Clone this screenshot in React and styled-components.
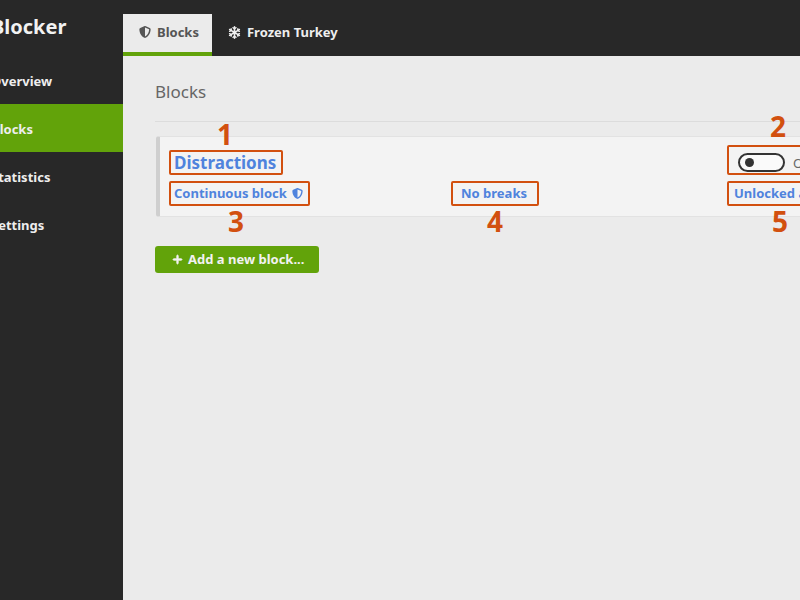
import React from "react";
import styled, { createGlobalStyle } from "styled-components";
import { FaShieldHalved, FaSnowflake, FaPlus } from "react-icons/fa6";

const GlobalStyle = createGlobalStyle`
  html, body {
    margin: 0;
    height: 100%;
    overflow: hidden;
    background: #ebebeb;
    font-family: "Noto Sans", "Open Sans", sans-serif;
  }
`;

const dark = "#282828";
const green = "#62a30a";
const blue = "#4f83dd";
const orange = "#d2500f";

// the window is wider than the picture: it runs off both sides
const Shell = styled.div`
  display: flex;
  width: 1040px;
  height: 600px;
  margin-left: -60px;
`;

const Sidebar = styled.aside`
  flex: 0 0 183px;
  background: ${dark};
  color: #eee;
`;

const Brand = styled.div`
  height: 56px;
  padding-left: 51px;
  box-sizing: border-box;
  font-size: 20px;
  font-weight: 700;
  line-height: 53px;
  color: #f2f2f2;
`;

const NavItem = styled.div`
  height: 48px;
  padding-left: 51px;
  font-size: 13px;
  font-weight: 700;
  line-height: 50px;
  background: ${(p) => (p.$active ? green : "transparent")};
`;

const Main = styled.main`
  flex: 1;
  display: flex;
  flex-direction: column;
`;

const TabBar = styled.nav`
  display: flex;
  align-items: flex-end;
  height: 56px;
  background: ${dark};
`;

const Tab = styled.div`
  display: flex;
  align-items: center;
  gap: 6px;
  height: 42px;
  padding: 0 13px 2px 16px;
  box-sizing: border-box;
  font-size: 13px;
  font-weight: 700;
  color: ${(p) => (p.$active ? "#555" : "#eee")};
  background: ${(p) => (p.$active ? "#ebebeb" : "transparent")};
  border-bottom: 4px solid ${(p) => (p.$active ? green : "transparent")};
`;

const Content = styled.section`
  flex: 1;
  padding: 24px 32px;
  background: #ebebeb;
`;

const Header = styled.header`
  display: flex;
  align-items: flex-start;
  justify-content: space-between;
  height: 41px;
  margin-bottom: 14px;
  border-bottom: 1px solid #dcdcdc;
`;

const Title = styled.h1`
  margin: 0;
  font-size: 17px;
  font-weight: 400;
  line-height: 23px;
  color: #666;
`;

const GreyButton = styled.div`
  width: 120px;
  height: 27px;
  background: #dcdcdc;
  border-radius: 3px;
`;

const Card = styled.article`
  display: flex;
  flex-direction: column;
  justify-content: center;
  gap: 10px;
  height: 81px;
  box-sizing: border-box;
  margin-left: 1px;
  padding: 0 0 0 14px;
  background: #f3f3f3;
  border: 1px solid #e2e2e2;
  border-left: 4px solid #cfcfcf;
  border-radius: 3px;
`;

const Row = styled.div`
  display: grid;
  grid-template-columns: 287px 273px 1fr;
  align-items: center;
`;

const BlockName = styled.span`
  font-size: 17px;
  font-weight: 700;
  color: ${blue};
`;

const BlockLink = styled.span`
  display: inline-flex;
  align-items: center;
  gap: 5px;
  font-size: 13px;
  font-weight: 700;
  color: ${blue};
`;

const ToggleRow = styled.div`
  display: flex;
  align-items: center;
  gap: 8px;
  margin-left: 4px;
  font-size: 13px;
  color: #666;
`;

const Toggle = styled.span`
  display: flex;
  align-items: center;
  width: 47px;
  height: 19px;
  box-sizing: border-box;
  padding-left: 5px;
  background: #fafafa;
  border: 2px solid #333;
  border-radius: 10px;

  &::before {
    content: "";
    width: 9px;
    height: 9px;
    background: #333;
    border-radius: 50%;
  }
`;

const Note = styled.span`
  position: relative;
  display: inline-flex;
  justify-self: start;

  &::before {
    content: "";
    position: absolute;
    inset: ${(p) => p.$inset};
    border: 2px solid ${orange};
    border-radius: 2px;
  }
`;

const NoteNumber = styled.span`
  position: absolute;
  left: ${(p) => p.$left}px;
  top: ${(p) => p.$top}px;
  font-size: 28px;
  font-weight: 700;
  line-height: 34px;
  color: ${orange};
`;

const AddButton = styled.button`
  display: flex;
  align-items: center;
  gap: 5px;
  height: 27px;
  margin-top: 29px;
  padding: 0 15px 1px 17px;
  border: 0;
  border-radius: 3px;
  background: ${green};
  color: #f2f2f2;
  font-family: inherit;
  font-size: 13px;
  font-weight: 700;

  svg {
    stroke: currentColor;
    stroke-width: 40px;
  }
`;

export default function App() {
  return (
    <>
      <GlobalStyle />
      <Shell>
        <Sidebar>
          <Brand>Blocker</Brand>
          <NavItem>Overview</NavItem>
          <NavItem $active>Blocks</NavItem>
          <NavItem>Statistics</NavItem>
          <NavItem>Settings</NavItem>
        </Sidebar>
        <Main>
          <TabBar>
            <Tab $active>
              <FaShieldHalved size={12} />
              Blocks
            </Tab>
            <Tab>
              <FaSnowflake size={13} />
              Frozen Turkey
            </Tab>
          </TabBar>
          <Content>
            <Header>
              <Title>Blocks</Title>
              <GreyButton />
            </Header>
            <Card>
              <Row>
                <Note $inset="-1px -7px -1px -5px">
                  <BlockName>Distractions</BlockName>
                  <NoteNumber $left={43} $top={-34}>1</NoteNumber>
                </Note>
                <span />
                <Note $inset="-8px -7px -3px -7px">
                  <ToggleRow>
                    <Toggle />
                    Off
                  </ToggleRow>
                  <NoteNumber $left={36} $top={-44}>2</NoteNumber>
                </Note>
              </Row>
              <Row>
                <Note $inset="-3px -7px -4px -5px">
                  <BlockLink>
                    Continuous block
                    <FaShieldHalved size={11} />
                  </BlockLink>
                  <NoteNumber $left={54} $top={20}>3</NoteNumber>
                </Note>
                <Note $inset="-3px -12px -4px -10px">
                  <BlockLink>No breaks</BlockLink>
                  <NoteNumber $left={26} $top={20}>4</NoteNumber>
                </Note>
                <Note $inset="-3px -7px -4px -7px">
                  <BlockLink>Unlocked anytime</BlockLink>
                  <NoteNumber $left={38} $top={20}>5</NoteNumber>
                </Note>
              </Row>
            </Card>
            <AddButton>
              <FaPlus size={11} />
              Add a new block...
            </AddButton>
          </Content>
        </Main>
      </Shell>
    </>
  );
}
